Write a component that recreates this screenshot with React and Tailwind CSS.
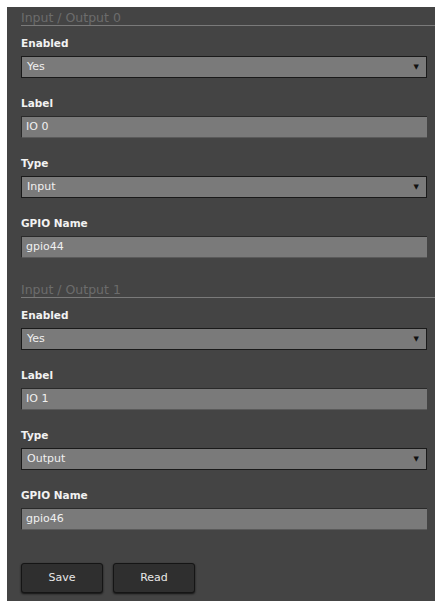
import React from "react";

const ios = [
  { title: "Input / Output 0", enabled: "Yes", label: "IO 0", type: "Input", gpio: "gpio44" },
  { title: "Input / Output 1", enabled: "Yes", label: "IO 1", type: "Output", gpio: "gpio46" },
];

function Select({ value }) {
  return (
    <div className="flex h-[22px] items-center justify-between border border-[#1a1a1a] bg-[#7a7a7a] pl-[5px] pr-[7px] text-[11px] text-[#f0f0f0]">
      <span>{value}</span>
      <span className="text-[7px] text-[#111]">▼</span>
    </div>
  );
}

function Input({ value }) {
  return (
    <div className="flex h-[22px] items-center border-t border-l border-[#2a2a2a] border-b border-b-[#5a5a5a] bg-[#7a7a7a] px-[4px] text-[11px] text-[#f0f0f0]">
      {value}
    </div>
  );
}

function Field({ label, children, first }) {
  return (
    <div className={first ? "" : "mt-[18px]"}>
      <div className="mb-[6px] text-[10.5px] font-bold leading-[14px] text-[#f2f2f2]">{label}</div>
      {children}
    </div>
  );
}

export default function App() {
  return (
    <div className="min-h-screen bg-white pl-[7px] pt-[7px] pr-[2px]" style={{ fontFamily: "'DejaVu Sans', Verdana, sans-serif" }}>
      <div className="h-[594px] bg-[#444444] pl-[14px] pt-[4px]">
        {ios.map((io, i) => (
          <div key={io.title} className={i ? "mt-[25px]" : ""}>
            <div className="border-b border-[#7a7a7a] text-[12.5px] leading-[14px] text-[#6c6c6c]">{io.title}</div>
            <div className="pr-[8px] pt-[10px]">
              <Field label="Enabled" first>
                <Select value={io.enabled} />
              </Field>
              <Field label="Label">
                <Input value={io.label} />
              </Field>
              <Field label="Type">
                <Select value={io.type} />
              </Field>
              <Field label="GPIO Name">
                <Input value={io.gpio} />
              </Field>
            </div>
          </div>
        ))}
        <div className="mt-[33px] flex gap-[10px]">
          <button className="h-[30px] w-[82px] rounded-[3px] border border-[#151515] bg-[#2f2f2f] text-[11px] text-[#e8e8e8] shadow-[0_1px_2px_#111]">Save</button>
          <button className="h-[30px] w-[82px] rounded-[3px] border border-[#151515] bg-[#2f2f2f] text-[11px] text-[#e8e8e8] shadow-[0_1px_2px_#111]">Read</button>
        </div>
      </div>
    </div>
  );
}
